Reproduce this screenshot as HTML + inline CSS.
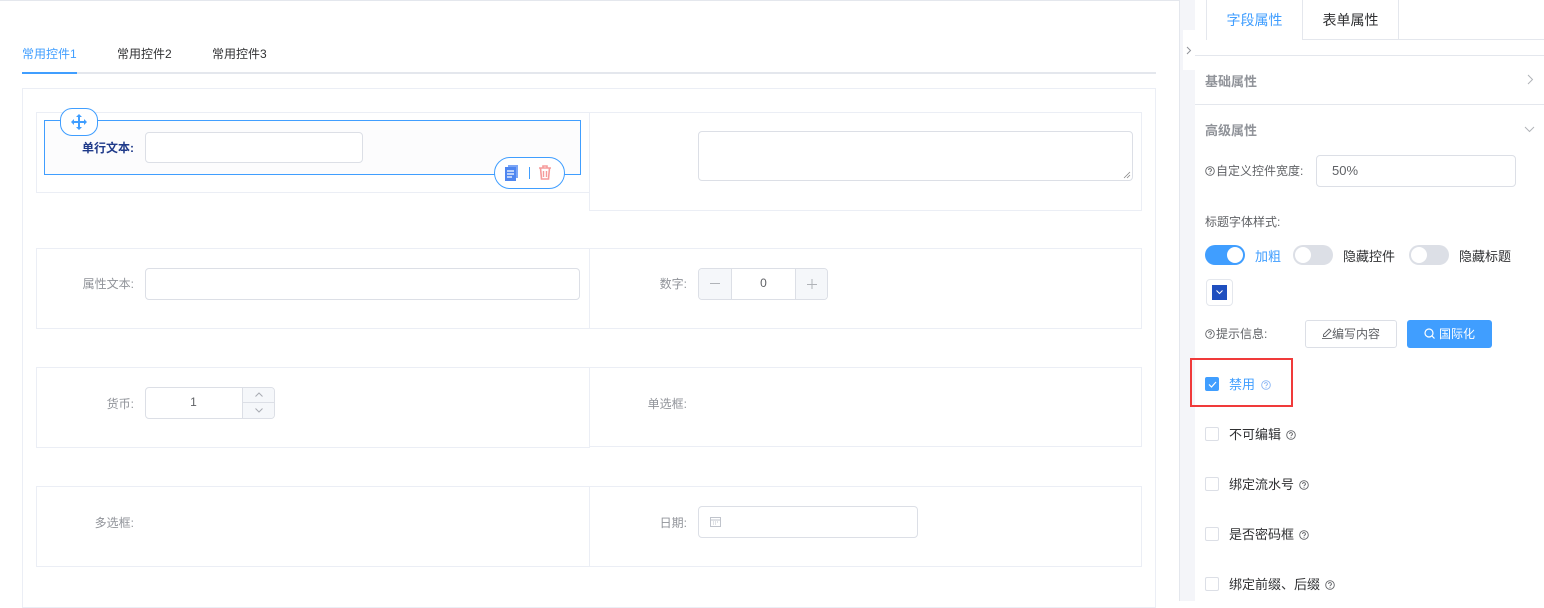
<!DOCTYPE html>
<html><head><meta charset="utf-8">
<style>
*{box-sizing:border-box;margin:0;padding:0}
body{width:1544px;height:601px;overflow:hidden;background:#fff;font-family:"Liberation Sans","Noto Sans CJK SC",sans-serif;font-size:12px;color:#606266;position:relative}
.a{position:absolute}
.cell{position:absolute;border:1px solid #ebeef5}
.inp{position:absolute;border:1px solid #dcdfe6;border-radius:4px;background:#fff}
.lbl{position:absolute;font-size:12px;color:#606266;text-align:right}
.chk{position:absolute;width:14px;height:14px;border:1px solid #dcdfe6;border-radius:2px;background:#fff}
.q{display:inline-block;width:10px;height:10px;vertical-align:-1px;margin-left:5px}
.sw{position:absolute;width:40px;height:20px;border-radius:10px;background:#dcdfe6}
.sw i{position:absolute;top:2px;left:2px;width:16px;height:16px;border-radius:50%;background:#fff}
</style></head><body>
<svg width="0" height="0" style="position:absolute"><defs><symbol id="q" viewBox="0 0 10 10"><circle cx="5" cy="5" r="4.3" fill="none" stroke="currentColor" stroke-width="0.9"/><path d="M3.6 4a1.4 1.4 0 1 1 2 1.2c-.5.3-.6.5-.6 1" fill="none" stroke="currentColor" stroke-width="0.9"/><circle cx="5" cy="7.6" r="0.5" fill="currentColor"/></symbol></defs></svg>
<div class="a" style="left:0;top:0;width:1180px;height:1px;background:#e4e7ed"></div>
<div class="a" style="left:22px;top:45px;color:#409eff">常用控件1</div>
<div class="a" style="left:117px;top:45px;color:#303133">常用控件2</div>
<div class="a" style="left:212px;top:45px;color:#303133">常用控件3</div>
<div class="a" style="left:22px;top:72px;width:1134px;height:2px;background:#e4e7ed"></div>
<div class="a" style="left:22px;top:72px;width:55px;height:2px;background:#409eff"></div>
<div class="a" style="left:22px;top:88px;width:1134px;height:520px;border:1px solid #ebeef5"></div>

<div class="cell" style="left:36px;top:112px;width:554px;height:81px"></div>
<div class="cell" style="left:589px;top:112px;width:553px;height:99px"></div>
<div class="a" style="left:44px;top:120px;width:537px;height:55px;border:1px solid #409eff;background:#fcfcfd"></div>
<div class="a" style="left:60px;top:108px;width:38px;height:28px;border:1px solid #409eff;border-radius:12px;background:#fff"></div>
<svg class="a" style="left:70px;top:113px" width="18" height="18" viewBox="0 0 18 18"><path d="M9 1l3 3H10v4h4V6l3 3-3 3v-2h-4v4h2l-3 3-3-3h2v-4H4v2L1 9l3-3v2h4V4H6z" fill="#409eff"/></svg>
<div class="lbl" style="left:60px;top:139px;width:74px;font-weight:bold;color:#1f3a8a">单行文本:</div>
<div class="inp" style="left:145px;top:132px;width:218px;height:31px"></div>
<div class="a" style="left:494px;top:157px;width:71px;height:32px;border:1px solid #409eff;border-radius:16px;background:#fff"></div>
<svg class="a" style="left:504px;top:164px" width="16" height="18" viewBox="0 0 16 18"><rect x="4" y="1" width="10" height="13" fill="#7ba6f7"/><rect x="1" y="3" width="11" height="14" fill="#4f86f0"/><path d="M3 7h7M3 10h7M3 13h5" stroke="#fff" stroke-width="1.3"/></svg>
<div class="a" style="left:529px;top:167px;width:1px;height:12px;background:#409eff"></div>
<svg class="a" style="left:538px;top:165px" width="14" height="15" viewBox="0 0 14 15"><path d="M1 3h12M5 3V1h4v2M2.5 3l1 11h7l1-11" stroke="#f59b9b" stroke-width="1.6" fill="none"/><path d="M5.5 6v6M8.5 6v6" stroke="#f59b9b" stroke-width="1.4"/></svg>
<div class="inp" style="left:698px;top:131px;width:435px;height:50px"></div>
<svg class="a" style="left:1123px;top:171px" width="8" height="8" viewBox="0 0 8 8"><path d="M1 7L7 1M4 7L7 4" stroke="#888" stroke-width="0.8"/></svg>

<div class="cell" style="left:36px;top:248px;width:554px;height:81px"></div>
<div class="cell" style="left:589px;top:248px;width:553px;height:81px"></div>
<div class="lbl" style="left:60px;top:275px;width:74px;color:#909399">属性文本:</div>
<div class="inp" style="left:145px;top:268px;width:435px;height:32px"></div>
<div class="lbl" style="left:620px;top:275px;width:67px;color:#909399">数字:</div>
<div class="inp" style="left:698px;top:268px;width:130px;height:32px;overflow:hidden">
 <div class="a" style="left:0;top:0;width:33px;height:30px;background:#f5f7fa;border-right:1px solid #dcdfe6"><svg class="a" style="left:11px;top:14px" width="10" height="2"><rect width="10" height="1" fill="#b0b3b8"/></svg></div>
 <div class="a" style="left:96px;top:0;width:33px;height:30px;background:#f5f7fa;border-left:1px solid #dcdfe6"><svg class="a" style="left:11px;top:10px" width="10" height="10"><path d="M0 5.5h10M5 0v10" stroke="#b0b3b8"/></svg></div>
 <div class="a" style="left:33px;top:7px;width:63px;text-align:center;color:#606266">0</div>
</div>

<div class="cell" style="left:36px;top:367px;width:554px;height:81px"></div>
<div class="cell" style="left:589px;top:367px;width:553px;height:80px"></div>
<div class="lbl" style="left:60px;top:395px;width:74px;color:#909399">货币:</div>
<div class="inp" style="left:145px;top:387px;width:130px;height:32px;overflow:hidden">
 <div class="a" style="left:0;top:7px;width:95px;text-align:center;color:#606266">1</div>
 <div class="a" style="left:96px;top:0;width:33px;height:15px;background:#f5f7fa;border-left:1px solid #dcdfe6;border-bottom:1px solid #dcdfe6"><svg class="a" style="left:12px;top:4px" width="8" height="5"><path d="M0.5 4.5L4 1l3.5 3.5" fill="none" stroke="#a8abb2"/></svg></div>
 <div class="a" style="left:96px;top:15px;width:33px;height:15px;background:#f5f7fa;border-left:1px solid #dcdfe6"><svg class="a" style="left:12px;top:5px" width="8" height="5"><path d="M0.5 0.5L4 4l3.5-3.5" fill="none" stroke="#a8abb2"/></svg></div>
</div>
<div class="lbl" style="left:620px;top:395px;width:67px;color:#909399">单选框:</div>

<div class="cell" style="left:36px;top:486px;width:554px;height:81px"></div>
<div class="cell" style="left:589px;top:486px;width:553px;height:81px"></div>
<div class="lbl" style="left:60px;top:514px;width:74px;color:#909399">多选框:</div>
<div class="lbl" style="left:620px;top:514px;width:67px;color:#909399">日期:</div>
<div class="inp" style="left:698px;top:506px;width:220px;height:32px"></div>
<svg class="a" style="left:710px;top:516px" width="11" height="11" viewBox="0 0 11 11"><rect x="0.5" y="1.5" width="10" height="9" fill="none" stroke="#c0c4cc"/><path d="M0.5 4h10M3 6h1M5 6h1M7 6h1M3 8h1M5 8h1" stroke="#c0c4cc"/></svg>

<div class="a" style="left:1179px;top:0;width:16px;height:601px;background:#f4f5f9;border-left:1px solid #e4e7ed"></div>
<div class="a" style="left:1183px;top:30px;width:12px;height:40px;background:#fff"><svg class="a" style="left:3px;top:16px" width="6" height="9"><path d="M1 1l3.5 3.5L1 8" fill="none" stroke="#909399"/></svg></div>

<div class="a" style="left:1206px;top:0;width:97px;height:40px;border:1px solid #e4e7ed;border-top:0;border-bottom:0;color:#409eff;font-size:14px;text-align:center;line-height:40px">字段属性</div>
<div class="a" style="left:1303px;top:0;width:96px;height:40px;border-right:1px solid #e4e7ed;border-bottom:1px solid #e4e7ed;color:#303133;font-size:14px;text-align:center;line-height:40px">表单属性</div>
<div class="a" style="left:1399px;top:39px;width:145px;height:1px;background:#e4e7ed"></div>
<div class="a" style="left:1195px;top:55px;width:349px;height:1px;background:#e4e7ed"></div>
<div class="a" style="left:1205px;top:71px;font-size:13px;font-weight:bold;color:#909399">基础属性</div>
<svg class="a" style="left:1527px;top:74px" width="7" height="11"><path d="M1 1l4.5 4.5L1 10" fill="none" stroke="#b0b3b8"/></svg>
<div class="a" style="left:1195px;top:104px;width:349px;height:1px;background:#e4e7ed"></div>
<div class="a" style="left:1205px;top:120px;font-size:13px;font-weight:bold;color:#909399">高级属性</div>
<svg class="a" style="left:1524px;top:126px" width="11" height="7"><path d="M1 1l4.5 4.5L10 1" fill="none" stroke="#b0b3b8"/></svg>

<div class="a" style="left:1205px;top:162px;color:#606266"><svg class="q" style="margin:0 1px 0 0;color:#606266"><use href="#q"/></svg>自定义控件宽度:</div>
<div class="inp" style="left:1316px;top:155px;width:200px;height:32px;padding:7px 15px;font-size:13px">50%</div>
<div class="a" style="left:1205px;top:213px">标题字体样式:</div>
<div class="sw" style="left:1205px;top:245px;background:#409eff"><i style="left:22px"></i></div>
<div class="a" style="left:1255px;top:246px;color:#409eff;font-size:13px">加粗</div>
<div class="sw" style="left:1293px;top:245px"><i></i></div>
<div class="a" style="left:1343px;top:246px;color:#303133;font-size:13px">隐藏控件</div>
<div class="sw" style="left:1409px;top:245px"><i></i></div>
<div class="a" style="left:1459px;top:246px;color:#303133;font-size:13px">隐藏标题</div>
<div class="a" style="left:1206px;top:279px;width:27px;height:27px;border:1px solid #e4e7ed;border-radius:4px;padding:5px"><div style="width:15px;height:15px;background:#1f4fbf;position:relative"><svg class="a" style="left:4px;top:5px" width="7" height="5"><path d="M0.5 0.5L3.5 3.5l3-3" fill="none" stroke="#fff"/></svg></div></div>

<div class="a" style="left:1205px;top:325px"><svg class="q" style="margin:0 1px 0 0;color:#606266"><use href="#q"/></svg>提示信息:</div>
<div class="a" style="left:1305px;top:320px;width:92px;height:28px;border:1px solid #dcdfe6;border-radius:3px;text-align:center;line-height:26px;color:#606266"><svg width="10" height="11" style="vertical-align:-1px"><path d="M7 1l2 2-5.5 5.5H1.5V6.5z" fill="none" stroke="#606266" stroke-width="0.9"/><path d="M0 10.5h10" stroke="#606266" stroke-width="0.9"/></svg>编写内容</div>
<div class="a" style="left:1407px;top:320px;width:85px;height:28px;background:#409eff;border-radius:3px;text-align:center;line-height:28px;color:#fff"><svg width="11" height="11" style="vertical-align:-1px;margin-right:4px"><circle cx="5" cy="5" r="4" fill="none" stroke="#fff" stroke-width="1.2"/><path d="M8 8l2.5 2.5" stroke="#fff" stroke-width="1.2"/></svg>国际化</div>

<div class="a" style="left:1190px;top:358px;width:103px;height:49px;border:2px solid #f03a3a"></div>
<div class="chk" style="left:1205px;top:377px;background:#409eff;border-color:#409eff"><svg class="a" style="left:2px;top:3px" width="9" height="7"><path d="M1 3.5l2.5 2.5L8 1" fill="none" stroke="#fff" stroke-width="1.2"/></svg></div>
<div class="a" style="left:1229px;top:374px;color:#409eff;font-size:13px">禁用<svg class="q" style="color:#8ab6f5;margin-left:6px"><use href="#q"/></svg></div>
<div class="chk" style="left:1205px;top:427px"></div>
<div class="a" style="left:1229px;top:424px;color:#303133;font-size:13px">不可编辑<svg class="q" style="color:#606266"><use href="#q"/></svg></div>
<div class="chk" style="left:1205px;top:477px"></div>
<div class="a" style="left:1229px;top:474px;color:#303133;font-size:13px">绑定流水号<svg class="q" style="color:#606266"><use href="#q"/></svg></div>
<div class="chk" style="left:1205px;top:527px"></div>
<div class="a" style="left:1229px;top:524px;color:#303133;font-size:13px">是否密码框<svg class="q" style="color:#606266"><use href="#q"/></svg></div>
<div class="chk" style="left:1205px;top:577px"></div>
<div class="a" style="left:1229px;top:574px;color:#303133;font-size:13px">绑定前缀、后缀<svg class="q" style="color:#606266"><use href="#q"/></svg></div>
</body></html>
